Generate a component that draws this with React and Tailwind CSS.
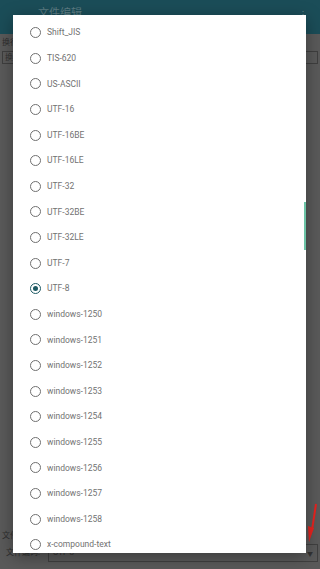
import React from "react";

const encodings = [
  "Shift_JIS",
  "TIS-620",
  "US-ASCII",
  "UTF-16",
  "UTF-16BE",
  "UTF-16LE",
  "UTF-32",
  "UTF-32BE",
  "UTF-32LE",
  "UTF-7",
  "UTF-8",
  "windows-1250",
  "windows-1251",
  "windows-1252",
  "windows-1253",
  "windows-1254",
  "windows-1255",
  "windows-1256",
  "windows-1257",
  "windows-1258",
  "x-compound-text",
];

const Radio = ({ checked }) => (
  <span
    className={`flex h-[11px] w-[11px] shrink-0 items-center justify-center rounded-full border-[1.5px] ${
      checked ? "border-[#1e5a64]" : "border-[#707070]"
    }`}
  >
    {checked && <span className="h-[5px] w-[5px] rounded-full bg-[#1e5a64]" />}
  </span>
);

const App = () => {
  return (
    <div
      className="relative h-[569px] w-[320px] overflow-hidden bg-[#5a5a5a]"
      style={{ fontFamily: "Roboto, 'Noto Sans CJK SC', sans-serif" }}
    >
      {/* Page behind the dialog (dimmed) */}
      <div className="flex h-[34px] items-center justify-between bg-[#1b4d58] pl-[38px] pr-[12px]">
        <span className="-mt-[6px] text-[11px] text-[#5d7c83]">文件编辑</span>
        <span className="-mt-[6px] text-[10px] text-[#5d7c83]">⋮</span>
      </div>
      <div className="flex h-[535px] flex-col px-[2px] pt-[3px]">
        <div className="flex h-[12px] items-center text-[8px] text-[#2e2e2e]">换行符</div>
        <div className="mt-[2px] flex h-[13px] items-center border border-[#3f3f3f] px-[2px] text-[8px] text-[#333]">
          换
        </div>
        <div className="flex-1" />
        <div className="flex h-[14px] items-center text-[8px] text-[#2e2e2e]">文件</div>
        <div className="mb-[6px] flex h-[20px] items-center gap-[2px]">
          <span className="w-[44px] pl-[4px] text-[8px] text-[#2e2e2e]">文件编码:</span>
          <div className="flex h-[18px] flex-1 items-center justify-between border border-[#404040] px-[4px] text-[8px] text-[#2f2f2f]">
            <span>UTF-8</span>
            <span className="text-[6px] text-[#333]">▼</span>
          </div>
        </div>
      </div>

      {/* Red annotation arrow */}
      <svg className="absolute left-[300px] top-[500px]" width="20" height="50" viewBox="0 0 20 50">
        <path d="M16 4 L12 30" stroke="#e8231f" strokeWidth="2" fill="none" />
        <path d="M8 26 L14 28 L9 42 Z" fill="#e8231f" />
      </svg>

      {/* Dialog */}
      <div className="absolute left-[13px] top-[15px] h-[538px] w-[293px] overflow-hidden bg-white shadow-[0_4px_16px_rgba(0,0,0,0.35)]">
        <div className="flex flex-col pt-[5px]">
          {encodings.map((name) => (
            <div key={name} className="flex h-[25.6px] shrink-0 items-center gap-[6px] pl-[17px]">
              <Radio checked={name === "UTF-8"} />
              <span className="text-[8.5px] text-[#727272]">{name}</span>
            </div>
          ))}
        </div>
        <div className="absolute right-0 top-[187px] h-[48px] w-[2px] bg-[#6cc3a6]" />
      </div>
    </div>
  );
};

export default App;
